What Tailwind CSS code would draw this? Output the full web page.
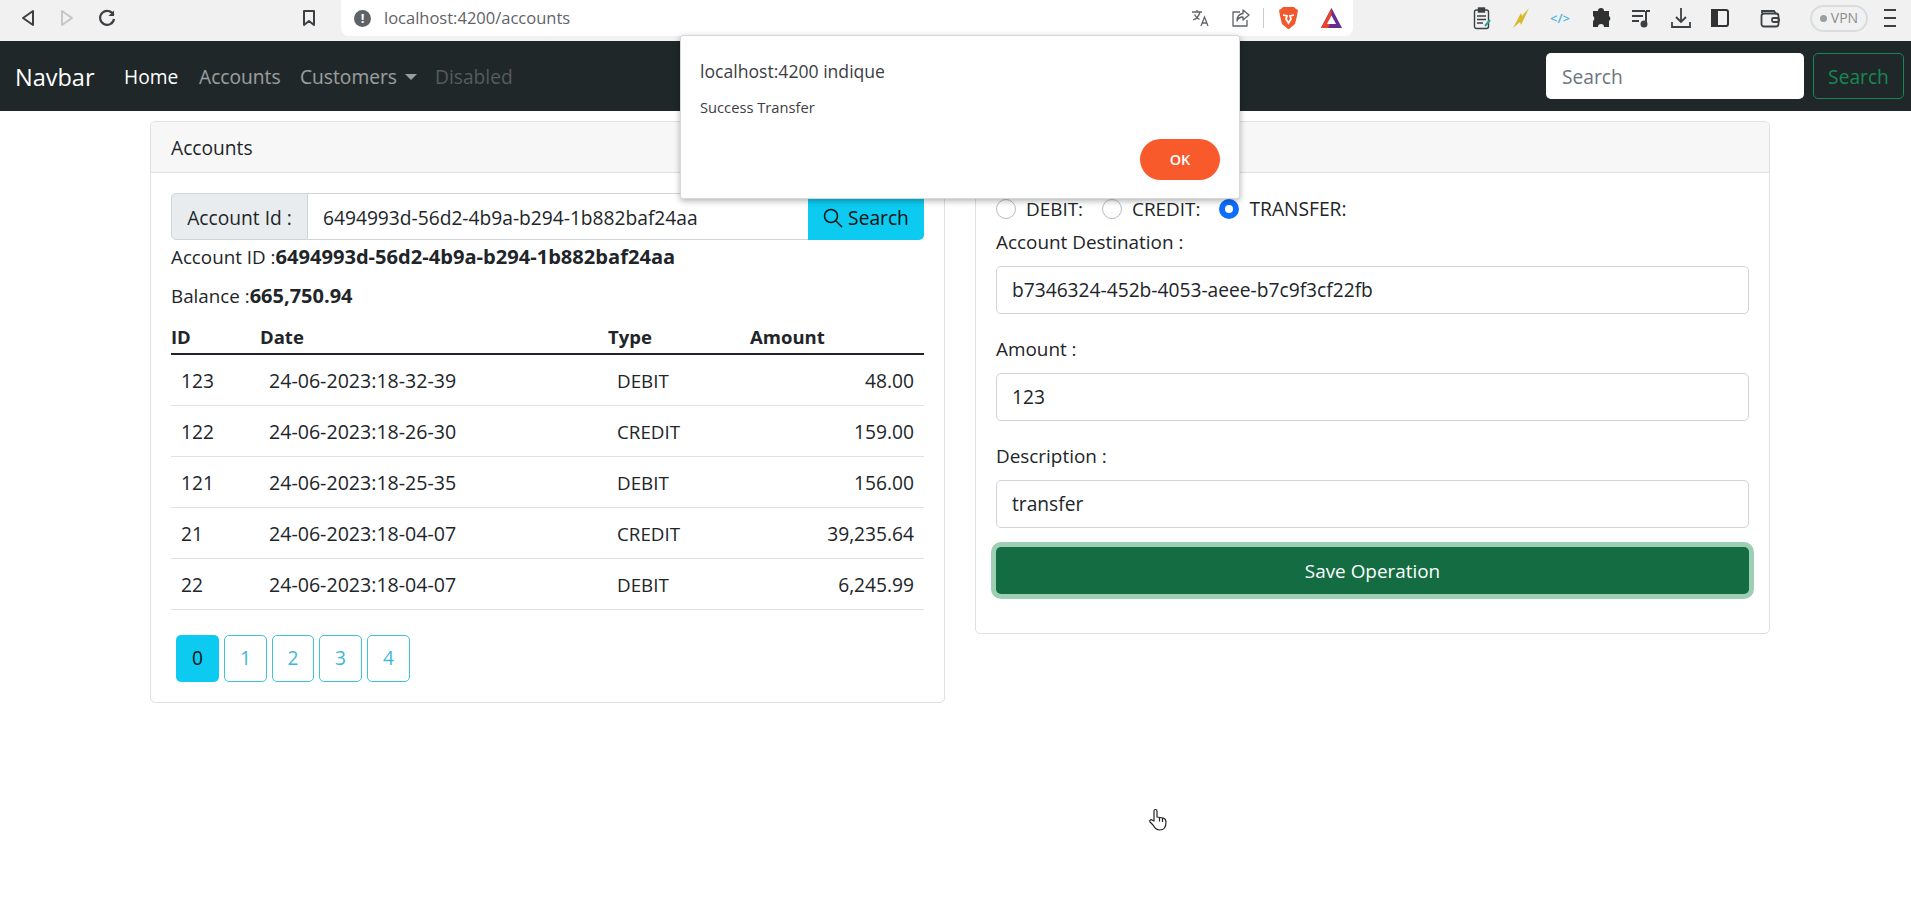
<!DOCTYPE html>
<html lang="fr">
<head>
    <meta charset="UTF-8">
    <title>Accounts</title>
    <script src="https://cdn.jsdelivr.net/npm/@tailwindcss/browser@4"></script>
</head>
<body class="relative h-[905px] overflow-hidden bg-white font-['Open_Sans',sans-serif] text-[19.2px] leading-[28px] text-[#212529]">
    <!-- browser toolbar -->
    <div class="relative flex h-[41px] items-start bg-[#f1f1f1] text-[#3c4043]">
        <div class="flex h-[36px] w-[341px] items-center pl-[20px]">
            <svg class="h-[18px] w-[16px]" viewBox="0 0 16 18" fill="none" stroke="#3c4043" stroke-width="2" stroke-linejoin="round"><path d="M13 2 3 9l10 7z"/></svg>
            <svg class="ml-[23px] h-[18px] w-[16px]" viewBox="0 0 16 18" fill="none" stroke="#c4c7c9" stroke-width="2" stroke-linejoin="round"><path d="m3 2 10 7-10 7z"/></svg>
            <svg class="ml-[22px] h-[20px] w-[20px]" viewBox="0 0 20 20" fill="none" stroke="#3c4043" stroke-width="2.2"><path d="M16.5 7A7 7 0 1 0 17 11"/><path d="M17 2.5V8h-5.500z" stroke="none" fill="#3c4043"/></svg>
            <svg class="ml-[185px] h-[18px] w-[14px]" viewBox="0 0 14 18" fill="none" stroke="#3c4043" stroke-width="2" stroke-linejoin="round"><path d="M2 2h10v14l-5-4-5 4z"/></svg>
        </div>
        <div class="flex h-[36px] w-[1012px] items-center rounded-b-[8px] bg-white pl-[13px]">
            <span class="flex h-[17px] w-[17px] items-center justify-center rounded-full bg-[#5f6368] text-[13px] font-bold leading-none text-white">!</span>
            <span class="ml-[13px] text-[16.5px] text-[#5f6368]">localhost:4200/accounts</span>
            <svg class="ml-[621px] h-[20px] w-[20px]" viewBox="0 0 20 20" fill="none" stroke="#5f6368" stroke-width="1.300"><path d="M1 4h10M6 2v2M9 4c-1 4-4 7-7 8M3.500 6.500c1 2 3 4 5 5M10 18l3.500-9 3.500 9M11.300 15h4.500"/></svg>
            <svg class="ml-[20px] h-[20px] w-[20px]" viewBox="0 0 20 20" fill="none" stroke="#5f6368" stroke-width="1.300" stroke-linejoin="round"><path d="M9 4H2v14h14v-6"/><path d="M12 2l6 5-6 5V9c-3 0-5 1-6 4 0-5 2-7 6-7.500z"/></svg>
            <span class="ml-[12px] h-[20px] w-px bg-[#c8cacc]"></span>
            <svg class="ml-[14px] h-[24px] w-[21px]" viewBox="0 0 21 24"><path d="M5 1h11l2 2 2 1-1 6-2 8-6 5-1 0-6-5-2-8-1-6 2-1z" fill="#f1582b"/><path d="M5 9l4 1-1 3 2.500 4 2.500-4-1-3 4-1" fill="none" stroke="#fff" stroke-width="1.800"/></svg>
            <svg class="ml-[21px] h-[22px] w-[23px]" viewBox="0 0 23 22"><path d="M11.500 1 22 21H1z" fill="#662d91"/><path d="M11.500 1 1 21h7l3.500-7z" fill="#e8432e"/><path d="M11.500 8.500 16 17H7z" fill="#fff"/></svg>
        </div>
        <div class="flex h-[36px] flex-1 items-center pl-[120px]">
            <svg class="h-[23px] w-[18px]" viewBox="0 0 18 23" fill="none" stroke="#3c4043" stroke-width="1.400"><rect x="1.500" y="3" width="14" height="18.500" rx="2"/><rect x="5.500" y="1" width="6" height="4" fill="#3c4043"/><path d="M4 9h9M4 12.500h9M4 16h6"/><path d="m12 19 5-6" stroke="#2aa198" stroke-width="2"/></svg>
            <svg class="ml-[21px] h-[22px] w-[18px]" viewBox="0 0 18 22"><path d="M17 1 10 9 9 6 1 21l7-6 1 3z" fill="#d9b92c"/></svg>
            <span class="ml-[20px] w-[22px] text-[13px] font-semibold leading-none text-[#4fb6e3]">&lt;/&gt;</span>
            <svg class="ml-[19px] h-[20px] w-[20px]" viewBox="0 0 20 20"><path d="M7 3a3 3 0 0 1 6 0h5v5a3 3 0 0 1 0 5v6h-5a3 3 0 0 0-6 0H2v-6a3 3 0 0 0 0-5V3z" fill="#2f3133"/></svg>
            <svg class="ml-[20px] h-[20px] w-[20px]" viewBox="0 0 20 20" fill="none" stroke="#3c4043" stroke-width="2"><path d="M1 3h13M1 8h11M1 13h7"/><path d="M15 3v12"/><circle cx="13" cy="16" r="2.500" fill="#3c4043"/><path d="M15 3h4"/></svg>
            <svg class="ml-[20px] h-[22px] w-[20px]" viewBox="0 0 20 22" fill="none" stroke="#3c4043" stroke-width="1.800"><path d="M10 1v13M5 10l5 5 5-5M1 15v5h18v-5"/></svg>
            <svg class="ml-[20px] h-[18px] w-[18px]" viewBox="0 0 18 18" fill="none" stroke="#2f3133" stroke-width="2"><rect x="1" y="1" width="16" height="16" rx="2"/><rect x="1" y="1" width="5" height="16" fill="#2f3133"/></svg>
            <svg class="ml-[31px] h-[20px] w-[20px]" viewBox="0 0 20 20" fill="none" stroke="#3c4043" stroke-width="1.800"><path d="M2 5V3h12l2 3"/><rect x="1.500" y="5.500" width="17" height="13" rx="2.500"/><rect x="12" y="10" width="7" height="4" rx="1.500"/></svg>
            <span class="ml-[30px] flex h-[27px] w-[58px] items-center justify-center gap-[4px] rounded-full border-2 border-[#d9dcdd] text-[14px] text-[#8a8e91]"><span class="h-[7px] w-[7px] rounded-full bg-[#9a9ea1]"></span>VPN</span>
            <span class="ml-[16px] flex w-[12px] flex-col gap-[6px]"><i class="h-[2px] bg-[#3c4043]"></i><i class="h-[2px] bg-[#3c4043]"></i><i class="h-[2px] bg-[#3c4043]"></i></span>
        </div>
    </div>

    <!-- navbar -->
    <nav class="flex h-[70px] items-center bg-[#1f2729] pl-[15px] pr-[7px]">
        <a class="w-[109px] pt-[1px] text-[23.5px] text-white">Navbar</a>
        <a class="w-[75px] pt-[2px] text-white">Home</a>
        <a class="w-[101px] pt-[2px] text-white/55">Accounts</a>
        <a class="flex w-[135px] items-center pt-[2px] text-white/55">Customers<span class="ml-[8px] h-0 w-0 border-x-[6px] border-t-[6px] border-x-transparent border-t-white/55"></span></a>
        <a class="pt-[2px] text-white/25">Disabled</a>
        <div class="ml-auto flex items-center">
            <div class="flex h-[46px] w-[258px] items-center rounded-[5px] bg-white pl-[16px] pt-[2px] text-[#6c757d]">Search</div>
            <div class="ml-[9px] flex h-[46px] w-[91px] items-center justify-center rounded-[5px] border border-[#198754] pt-[2px] text-[#198754]">Search</div>
        </div>
    </nav>

    <!-- cards -->
    <main class="ml-[150px] mt-[10px] grid w-[1620px] grid-cols-2 items-start gap-[30px]">
        <section class="rounded-[5px] border border-[#dfe0e1]">
            <h2 class="flex h-[51px] items-center rounded-t-[5px] border-b border-[#dfe0e1] bg-[#f7f7f7] px-[20px] pt-[2px]">Accounts</h2>
            <div class="px-[20px] pb-[20px] pt-[20px]">
                <div class="flex h-[47px]">
                    <div class="flex w-[137px] items-center justify-center rounded-l-[5px] border border-[#ced4da] bg-[#e9ecef] pt-[2px]">Account Id :</div>
                    <div class="flex flex-1 items-center border-y border-[#ced4da] pl-[15px] pt-[2px]">6494993d-56d2-4b9a-b294-1b882baf24aa</div>
                    <div class="flex w-[116px] items-center justify-center gap-[5px] rounded-r-[5px] bg-[#0dcaf0] pt-[2px] text-[#111]">
                        <svg class="h-[20px] w-[20px]" viewBox="0 0 20 20" fill="none" stroke="#111" stroke-width="1.500"><circle cx="8" cy="8" r="6.500"/><path d="m13 13 6 6"/></svg>
                        Search
                    </div>
                </div>
                <p class="mt-[3px] text-[18.8px]">Account ID :<b class="text-[20.1px]">6494993d-56d2-4b9a-b294-1b882baf24aa</b></p>
                <p class="mt-[11px] text-[18.8px]">Balance :<b class="text-[20px]">665,750.94</b></p>
                <table class="mt-[13px] w-full table-fixed border-collapse">
                    <thead>
                        <tr class="h-[31px] border-b-2 border-[#212529] text-left align-top text-[18.5px]">
                            <th class="w-[89px] font-bold">ID</th>
                            <th class="w-[348px] font-bold">Date</th>
                            <th class="w-[142px] font-bold">Type</th>
                            <th class="font-bold">Amount</th>
                        </tr>
                    </thead>
                    <tbody>
                        <tr class="h-[51px] border-b border-[#dee2e6]"><td class="pl-[10px] pt-[2px]">123</td><td class="pl-[9px] pt-[2px] text-[19.6px]">24-06-2023:18-32-39</td><td class="pl-[9px] pt-[2px] text-[18.8px]">DEBIT</td><td class="pr-[10px] pt-[2px] text-right">48.00</td></tr>
                        <tr class="h-[51px] border-b border-[#dee2e6]"><td class="pl-[10px] pt-[2px]">122</td><td class="pl-[9px] pt-[2px] text-[19.6px]">24-06-2023:18-26-30</td><td class="pl-[9px] pt-[2px] text-[18.8px]">CREDIT</td><td class="pr-[10px] pt-[2px] text-right">159.00</td></tr>
                        <tr class="h-[51px] border-b border-[#dee2e6]"><td class="pl-[10px] pt-[2px]">121</td><td class="pl-[9px] pt-[2px] text-[19.6px]">24-06-2023:18-25-35</td><td class="pl-[9px] pt-[2px] text-[18.8px]">DEBIT</td><td class="pr-[10px] pt-[2px] text-right">156.00</td></tr>
                        <tr class="h-[51px] border-b border-[#dee2e6]"><td class="pl-[10px] pt-[2px]">21</td><td class="pl-[9px] pt-[2px] text-[19.6px]">24-06-2023:18-04-07</td><td class="pl-[9px] pt-[2px] text-[18.8px]">CREDIT</td><td class="pr-[10px] pt-[2px] text-right">39,235.64</td></tr>
                        <tr class="h-[51px] border-b border-[#dee2e6]"><td class="pl-[10px] pt-[2px]">22</td><td class="pl-[9px] pt-[2px] text-[19.6px]">24-06-2023:18-04-07</td><td class="pl-[9px] pt-[2px] text-[18.8px]">DEBIT</td><td class="pr-[10px] pt-[2px] text-right">6,245.99</td></tr>
                    </tbody>
                </table>
                <div class="ml-[5px] mt-[25px] flex gap-[5px]">
                    <span class="flex h-[47px] w-[43px] items-center justify-center rounded-[5px] bg-[#0dcaf0] text-[#111]">0</span>
                    <span class="flex h-[47px] w-[43px] items-center justify-center rounded-[5px] border border-[#3fc3dc] text-[#3fb8d8]">1</span>
                    <span class="flex h-[47px] w-[42px] items-center justify-center rounded-[5px] border border-[#3fc3dc] text-[#3fb8d8]">2</span>
                    <span class="flex h-[47px] w-[43px] items-center justify-center rounded-[5px] border border-[#3fc3dc] text-[#3fb8d8]">3</span>
                    <span class="flex h-[47px] w-[43px] items-center justify-center rounded-[5px] border border-[#3fc3dc] text-[#3fb8d8]">4</span>
                </div>
            </div>
        </section>

        <section class="rounded-[5px] border border-[#dfe0e1]">
            <h2 class="flex h-[51px] items-center rounded-t-[5px] border-b border-[#dfe0e1] bg-[#f7f7f7] px-[20px]">Operations</h2>
            <div class="px-[20px] pb-[39px] pt-[22px] text-[18.9px]">
                <div class="flex h-[28px] items-center">
                    <span class="h-[20px] w-[20px] rounded-full border border-[#b9bcbe]"></span><span class="ml-[10px]">DEBIT:</span>
                    <span class="ml-[19px] h-[20px] w-[20px] rounded-full border border-[#b9bcbe]"></span><span class="ml-[10px]">CREDIT:</span>
                    <span class="ml-[19px] h-[20px] w-[20px] rounded-full border-[6px] border-[#0d6efd]"></span><span class="ml-[10px] text-[19.2px]">TRANSFER:</span>
                </div>
                <label class="mt-[5px] block h-[28px]">Account Destination :</label>
                <div class="mt-[10px] flex h-[48px] items-center rounded-[5px] border border-[#ced4da] pl-[15px] text-[19.2px]">b7346324-452b-4053-aeee-b7c9f3cf22fb</div>
                <label class="mt-[21px] block h-[28px]">Amount :</label>
                <div class="mt-[10px] flex h-[48px] items-center rounded-[5px] border border-[#ced4da] pl-[15px] text-[19.2px]">123</div>
                <label class="mt-[21px] block h-[28px]">Description :</label>
                <div class="mt-[10px] flex h-[48px] items-center rounded-[5px] border border-[#ced4da] pl-[15px] text-[19.2px]">transfer</div>
                <button class="mt-[19px] block h-[47px] w-full rounded-[5px] bg-[#146c43] text-white ring-[5px] ring-[#9dcfb4]">Save Operation</button>
            </div>
        </section>
    </main>

    <!-- alert dialog, over the page -->
    <div class="absolute left-[680px] top-[35px] h-[164px] w-[560px] rounded-[3px] border border-[#d5d7d8] bg-white pl-[19px] pt-[22px] text-[#3c4043] shadow-[0_2px_6px_rgba(0,0,0,0.3)]">
        <p class="text-[17.6px] leading-[26px]">localhost:4200 indique</p>
        <p class="mt-[13px] text-[14.7px] leading-[20px]">Success Transfer</p>
        <span class="absolute left-[459px] top-[103px] flex h-[41px] w-[80px] items-center justify-center rounded-full bg-[#f95a2c] text-[14.5px] font-semibold text-white">OK</span>
    </div>

    <!-- hand cursor -->
    <svg class="absolute left-[1148px] top-[808px] h-[24px] w-[20px]" viewBox="0 0 20 24" fill="#fff" stroke="#222" stroke-width="1.200" stroke-linejoin="round"><path d="M6 13V3a1.500 1.500 0 0 1 3 0v6l6 1c2 .5 3 1.500 3 4 0 5-2 8-6 8-4 0-5-2-7-5l-3-3c-1-1.500 1-3 2-2z"/><path d="M11.500 9.500v4M14.500 10v4" fill="none"/></svg>
</body>
</html>
